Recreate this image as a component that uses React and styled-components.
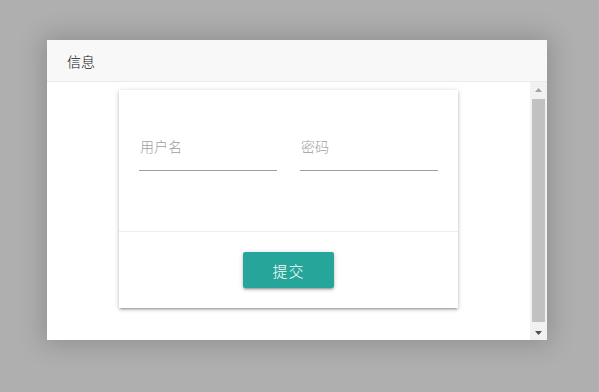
import React from "react";
import styled, { createGlobalStyle } from "styled-components";

const Global = createGlobalStyle`
  html, body { margin: 0; padding: 0; }
  body {
    background: #afafaf;
    font-family: Roboto, "Noto Sans CJK SC", sans-serif;
    width: 599px;
    height: 392px;
    overflow: hidden;
  }
`;

const Stage = styled.div`
  width: 599px;
  height: 392px;
  padding-top: 40px;
  padding-left: 47px;
  box-sizing: border-box;
`;

const Dialog = styled.div`
  width: 500px;
  height: 300px;
  background: #fff;
  box-shadow: 0 0 24px 4px rgba(0, 0, 0, 0.18);
  display: flex;
  flex-direction: column;
`;

const Header = styled.div`
  height: 41px;
  flex: none;
  background: #f8f8f8;
  border-bottom: 1px solid #eaeaea;
  display: flex;
  align-items: center;
  padding-left: 20px;
  font-size: 14px;
  font-weight: 300;
  color: #111;
`;

const Body = styled.div`
  flex: 1;
  min-height: 0;
  display: flex;
`;

const ScrollArea = styled.div`
  flex: 1;
  overflow: hidden;
`;

const Scrollbar = styled.div`
  width: 17px;
  flex: none;
  background: #f1f1f1;
  display: flex;
  flex-direction: column;
`;

const ArrowButton = styled.div`
  height: 17px;
  flex: none;
  display: flex;
  align-items: center;
  justify-content: center;
  padding-top: ${(p) => (p.$down ? "2px" : "0")};
  padding-bottom: ${(p) => (p.$down ? "0" : "2px")};
  box-sizing: border-box;
`;

const Track = styled.div`
  flex: 1;
  padding: 0 2px 1px;
  display: flex;
  flex-direction: column;
`;

const Thumb = styled.div`
  flex: 1;
  background: #c1c1c1;
`;

const Content = styled.div`
  padding: 8px 0 4px;
  display: flex;
  justify-content: center;
`;

const Card = styled.div`
  width: 339px;
  background: #fff;
  box-shadow: 0 2px 2px 0 rgba(0, 0, 0, 0.14), 0 3px 1px -2px rgba(0, 0, 0, 0.12),
    0 1px 5px 0 rgba(0, 0, 0, 0.2);
`;

const CardContent = styled.div`
  padding: 33px 20px 60px;
  display: grid;
  grid-template-columns: 138px 138px;
  column-gap: 23px;
  border-bottom: 1px solid #eee;
`;

const Input = styled.input`
  height: 47px;
  border: none;
  border-bottom: 1px solid #9e9e9e;
  outline: none;
  padding: 0 1px;
  font-size: 14px;
  font-weight: 300;
  font-family: Roboto, "Noto Sans CJK SC", sans-serif;
  background: transparent;
  color: #333;
  box-sizing: content-box;
  width: 136px;
  &::placeholder { color: #9e9e9e; }
`;

const CardAction = styled.div`
  padding: 20px 0;
  display: flex;
  justify-content: center;
`;

const Button = styled.button`
  width: 91px;
  height: 36px;
  border: none;
  border-radius: 2px;
  background: #26a69a;
  color: #fff;
  font-size: 15px;
  font-weight: 300;
  font-family: Roboto, "Noto Sans CJK SC", sans-serif;
  letter-spacing: 1px;
  box-shadow: 0 2px 2px 0 rgba(0, 0, 0, 0.14), 0 3px 1px -2px rgba(0, 0, 0, 0.12),
    0 1px 5px 0 rgba(0, 0, 0, 0.2);
  cursor: pointer;
`;

const Arrow = ({ down, color }) => (
  <svg width="7" height="4" viewBox="0 0 7 4">
    {down ? (
      <polygon points="0,0 7,0 3.5,4" fill={color} />
    ) : (
      <polygon points="3.5,0 7,4 0,4" fill={color} />
    )}
  </svg>
);

export default function App() {
  return (
    <>
      <Global />
      <Stage>
        <Dialog>
          <Header>信息</Header>
          <Body>
            <ScrollArea>
              <Content>
                <Card>
                  <CardContent>
                    <Input placeholder="用户名" />
                    <Input placeholder="密码" type="password" />
                  </CardContent>
                  <CardAction>
                    <Button>提交</Button>
                  </CardAction>
                </Card>
              </Content>
            </ScrollArea>
            <Scrollbar>
              <ArrowButton>
                <Arrow color="#a3a3a3" />
              </ArrowButton>
              <Track>
                <Thumb />
              </Track>
              <ArrowButton $down>
                <Arrow down color="#505050" />
              </ArrowButton>
            </Scrollbar>
          </Body>
        </Dialog>
      </Stage>
    </>
  );
}
